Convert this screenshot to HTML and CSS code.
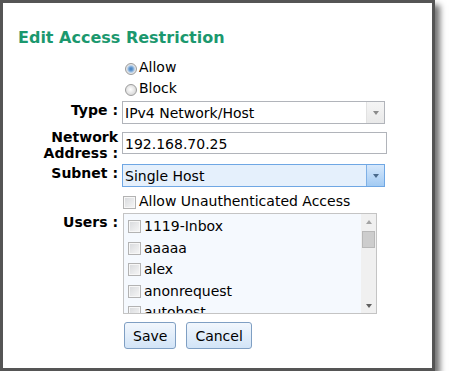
FILE: index.html
```html
<!DOCTYPE html>
<html>
<head>
<meta charset="utf-8">
<link rel="stylesheet" href="styles.css">
</head>
<body>
<div class="dialog">
  <h1 class="title">Edit Access Restriction</h1>
  <div class="form">
    <div class="row row-allow">
      <span class="label"></span>
      <div class="choice"><span class="radio checked"></span>Allow</div>
    </div>
    <div class="row">
      <span class="label"></span>
      <div class="choice"><span class="radio"></span>Block</div>
    </div>
    <div class="row row-type">
      <span class="label">Type :</span>
      <div class="select">
        <span class="select-text">IPv4 Network/Host</span>
        <span class="select-btn"><span class="arrow"></span></span>
      </div>
    </div>
    <div class="row row-network">
      <span class="label">Network Address :</span>
      <div class="textbox">192.168.70.25</div>
    </div>
    <div class="row row-subnet">
      <span class="label">Subnet :</span>
      <div class="select focused">
        <span class="select-text">Single Host</span>
        <span class="select-btn"><span class="arrow"></span></span>
      </div>
    </div>
    <div class="row row-anon">
      <span class="label"></span>
      <div class="check-line"><span class="checkbox"></span>Allow Unauthenticated Access</div>
    </div>
    <div class="row row-users">
      <span class="label">Users :</span>
      <div class="userlist">
        <div class="items">
          <div class="item"><span class="checkbox"></span>1119-Inbox</div>
          <div class="item"><span class="checkbox"></span>aaaaa</div>
          <div class="item"><span class="checkbox"></span>alex</div>
          <div class="item"><span class="checkbox"></span>anonrequest</div>
          <div class="item"><span class="checkbox"></span>autohost</div>
        </div>
        <div class="scrollbar">
          <div class="sb-btn"><span class="sb-up"></span></div>
          <div class="sb-track"><div class="sb-thumb"></div></div>
          <div class="sb-btn"><span class="sb-down"></span></div>
        </div>
      </div>
    </div>
    <div class="row row-buttons">
      <span class="label"></span>
      <div class="buttons">
        <button class="btn">Save</button>
        <button class="btn">Cancel</button>
      </div>
    </div>
  </div>
</div>
</body>
</html>
```
FILE: styles.css
```css
html, body {
  margin: 0;
  padding: 0;
  background: #fff;
}
body {
  font: 14px "DejaVu Sans", Verdana, sans-serif;
  color: #000;
}
.dialog {
  width: 435px;
  height: 371px;
  box-sizing: border-box;
  border: 3px solid #555;
  background: #fff;
  box-shadow: 5px 5px 6px rgba(0, 0, 0, 0.55);
  padding-top: 25px;
}
.title {
  margin: 0 0 0 15px;
  font: bold 16px/20px "DejaVu Sans", Verdana, sans-serif;
  color: #1b986e;
}
.form {
  margin-top: 9px;
  display: flex;
  flex-direction: column;
}
.row {
  display: flex;
  gap: 4px;
  align-items: flex-start;
}
.label {
  flex: none;
  width: 115px;
  text-align: right;
  font-weight: bold;
  line-height: 16px;
  padding-top: 1px;
}
.choice {
  display: flex;
  align-items: center;
  height: 21px;
  line-height: 21px;
}
.radio {
  width: 12px;
  height: 12px;
  box-sizing: border-box;
  border-radius: 50%;
  border: 1px solid #9c9c9c;
  background: radial-gradient(circle at 45% 45%, #ffffff 0, #f2f2f2 2px, #d6d6d6 6px);
  margin: 2px 2px 0 3px;
}
.radio.checked {
  background: radial-gradient(circle at 50% 50%, #3f7ec0 0, #6e9fd2 2px, #b9d0e8 3.5px, #e6e6e6 4.5px, #d9d9d9 6px);
}
.row-type { margin-top: 2px; }
.row-network { margin-top: 4px; }
.row-subnet { margin-top: 3px; }
.row-anon { margin-top: 4px; }
.row-users { margin-top: 2px; }
.row-buttons { margin-top: 8px; }

.select {
  display: flex;
  width: 263px;
  height: 23px;
  box-sizing: border-box;
  border: 1px solid #b1b4ba;
  background: #fff;
}
.select-text {
  flex: 1;
  padding: 1px 0 0 2px;
  line-height: 21px;
  overflow: visible;
}
.select-btn {
  width: 18px;
  box-sizing: border-box;
  border-left: 1px solid #e2e2e2;
  background: linear-gradient(#f5f5f5, #e9e9e9);
  display: flex;
  align-items: center;
  justify-content: center;
}
.arrow {
  width: 0;
  height: 0;
  border-left: 3.5px solid transparent;
  border-right: 3.5px solid transparent;
  border-top: 4px solid #8a8a8a;
}
.select.focused {
  border-color: #6fa7e4;
  background: #e5f0fc;
}
.select.focused .select-btn {
  border-left-color: #7eb0e6;
  background: linear-gradient(#d6e8fc, #a3cbf3);
}
.select.focused .arrow {
  border-top-color: #4a6a8c;
}
.textbox {
  width: 265px;
  height: 22px;
  box-sizing: border-box;
  margin-top: 4px;
  border: 1px solid #b1b4ba;
  padding: 1px 0 0 2px;
  line-height: 20px;
  background: #fff;
}
.check-line {
  display: flex;
  align-items: center;
  height: 20px;
  line-height: 20px;
}
.checkbox {
  flex: none;
  width: 13px;
  height: 13px;
  box-sizing: border-box;
  border: 1px solid #b3b3b3;
  box-shadow: inset 0 0 0 1px #f7f7f7;
  background: linear-gradient(135deg, #d7d9dc, #f7f7f7);
}
.check-line .checkbox {
  margin: 3px 3px 0 1px;
}
.userlist {
  margin-left: 1px;
  width: 254px;
  height: 101px;
  box-sizing: border-box;
  border: 1px solid #c4c4c4;
  background: #f5f9fe;
  display: flex;
}
.items {
  flex: 1;
  overflow: hidden;
  padding: 2px 0 0 4px;
}
.item {
  display: flex;
  align-items: center;
  height: 21.5px;
  line-height: 21.5px;
  white-space: nowrap;
}
.item .checkbox {
  margin-right: 3px;
}
.scrollbar {
  width: 15px;
  flex: none;
  background: #f0f0f0;
  display: flex;
  flex-direction: column;
}
.sb-btn {
  height: 15px;
  display: flex;
  align-items: center;
  justify-content: center;
}
.sb-up {
  width: 0;
  height: 0;
  border-left: 3.5px solid transparent;
  border-right: 3.5px solid transparent;
  border-bottom: 4px solid #a3a3a3;
}
.sb-down {
  width: 0;
  height: 0;
  border-left: 3.5px solid transparent;
  border-right: 3.5px solid transparent;
  border-top: 4px solid #606060;
}
.sb-track {
  flex: 1;
}
.sb-thumb {
  margin: 2px 1px 0 1px;
  height: 17px;
  box-sizing: border-box;
  border: 1px solid #b8b8b8;
  background: #cdcdcd;
}
.buttons {
  display: flex;
  gap: 10px;
  margin-left: 2px;
}
.btn {
  height: 27px;
  box-sizing: border-box;
  padding: 2px 8px 0;
  border: 1px solid #7f9fc3;
  border-radius: 3px;
  background: linear-gradient(#f2f7fd, #d2e4f7);
  font: 14px/23px "DejaVu Sans", Verdana, sans-serif;
  color: #000;
  margin: 0;
}
```
